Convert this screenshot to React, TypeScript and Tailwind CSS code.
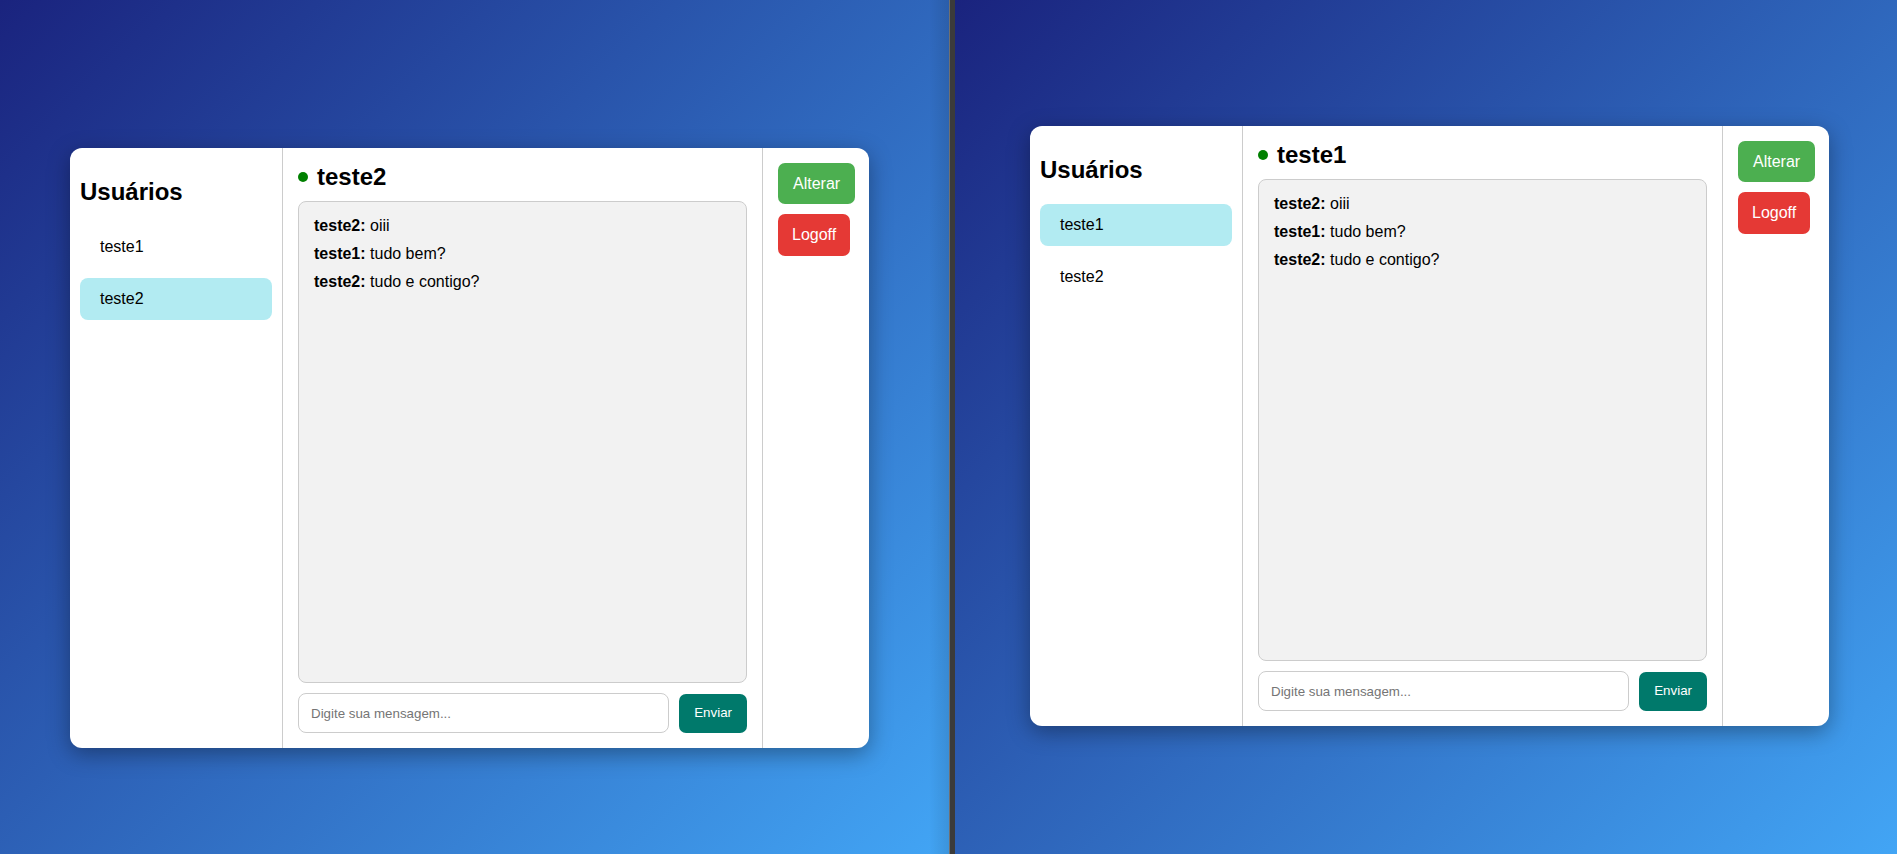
import { useState } from "react";

type Message = { from: string; text: string };

const messages: Message[] = [
  { from: "teste2", text: "oiii" },
  { from: "teste1", text: "tudo bem?" },
  { from: "teste2", text: "tudo e contigo?" },
];

const users = ["teste1", "teste2"];

interface ChatCardProps {
  selected: string;
}

const ChatCard = ({ selected }: ChatCardProps) => {
  const [draft, setDraft] = useState("");

  return (
    <div className="flex w-[799px] h-[600px] bg-white rounded-[12px] shadow-[0_6px_22px_rgba(0,0,0,0.35)] overflow-hidden text-black">
      {/* users list */}
      <div className="w-[213px] shrink-0 border-r border-[#cccccc] p-[10px]">
        <h2 className="mt-[20px] mb-[20px] text-[24px] leading-[28px] font-bold">
          Usuários
        </h2>
        {users.map((u) => (
          <div
            key={u}
            className={
              u === selected
                ? "flex items-center h-[42px] px-[20px] mb-[10px] rounded-[8px] bg-[#b2ebf2] text-[16px]"
                : "flex items-center h-[42px] px-[20px] mb-[10px] rounded-[8px] text-[16px]"
            }
          >
            {u}
          </div>
        ))}
      </div>

      {/* chat */}
      <div className="flex-1 flex flex-col px-[15px] pt-[15px] pb-[15px] min-w-0">
        <div className="flex items-center h-[28px] mb-[10px]">
          <span className="w-[10px] h-[10px] rounded-full bg-[#008000] mr-[9px]" />
          <h3 className="text-[24px] leading-[28px] font-bold">{selected}</h3>
        </div>
        <div className="flex-1 bg-[#f2f2f2] border border-[#cccccc] rounded-[8px] p-[15px] overflow-y-auto">
          {messages.map((m, i) => (
            <div key={i} className="mb-[10px] text-[16px] leading-[18px]">
              <strong>{m.from}:</strong> {m.text}
            </div>
          ))}
        </div>
        <div className="flex items-center gap-[10px] mt-[10px]">
          <input
            value={draft}
            onChange={(e) => setDraft(e.target.value)}
            placeholder="Digite sua mensagem..."
            className="flex-1 h-[40px] px-[12px] border border-[#cccccc] rounded-[8px] text-[13.33px] outline-none placeholder:text-[#757575]"
          />
          <button className="h-[39px] px-[15px] rounded-[7px] bg-[#00796b] text-white text-[13.33px]">
            Enviar
          </button>
        </div>
      </div>

      {/* actions */}
      <div className="w-[107px] shrink-0 border-l border-[#cccccc] p-[15px] flex flex-col items-start gap-[10px]">
        <button className="h-[41px] px-[15px] rounded-[7px] bg-[#4caf50] text-white text-[16px]">
          Alterar
        </button>
        <button className="h-[42px] px-[14px] rounded-[7px] bg-[#e53935] text-white text-[16px]">
          Logoff
        </button>
      </div>
    </div>
  );
};

export default function App() {
  return (
    <div className="flex w-[1897px] h-[854px] overflow-hidden font-['Liberation_Sans',Arial,sans-serif]">
      <div className="relative w-[949px] h-full shrink-0 pt-[148px] pl-[70px] bg-[linear-gradient(135deg,#1a237e,#42a5f5)]">
        <ChatCard selected="teste2" />
        <div className="absolute top-0 right-0 w-[20px] h-full bg-gradient-to-r from-transparent to-black/10" />
      </div>
      <div className="w-[1px] h-full shrink-0 bg-[#707070]" />
      <div className="w-[5px] h-full shrink-0 bg-[#3b3b3b]" />
      <div className="flex-1 h-full pt-[126px] pl-[75px] bg-[linear-gradient(135deg,#1a237e,#42a5f5)]">
        <ChatCard selected="teste1" />
      </div>
    </div>
  );
}
